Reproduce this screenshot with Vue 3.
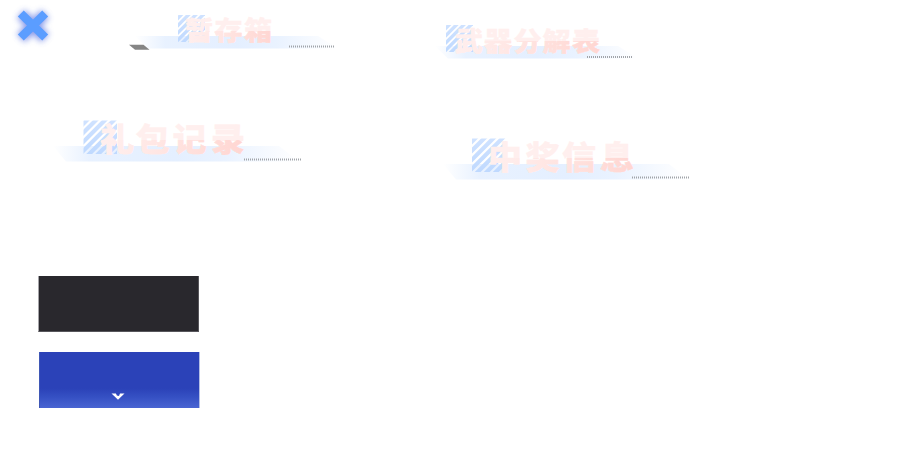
<script setup>
const titles = [
  { id: 'storage', text: '暂存箱', w: 220, h: 60, size: 28, xs: [65, 94.5, 124], base: 40.3, split: 31, sq: [58, 15, 27], bar: [15, 36, 203, 12.5], dots: [169, 46, 45], slab: true },
  { id: 'weapons', text: '武器分解表', w: 210, h: 60, size: 28, xs: [25, 54, 83.5, 112.5, 142], base: 50.8, split: 41, sq: [16, 25, 27], bar: [5, 46, 203, 12.5], dots: [157, 56.5, 45] },
  { id: 'gifts', text: '礼包记录', w: 260, h: 70, size: 34, xs: [50, 85.5, 122.5, 161], base: 51.2, split: 40, sq: [33.5, 20.5, 33.5], bar: [3, 46, 246, 15.5], dots: [194, 59, 58] },
  { id: 'winners', text: '中奖信息', w: 260, h: 70, size: 34, xs: [48, 85.5, 122, 160], base: 51.2, split: 40, sq: [32, 20.5, 33.5], bar: [3, 46, 246, 15.5], dots: [192, 59, 58] },
]
</script>

<template>
  <main class="sheet">
    <svg class="close" width="66" height="60" viewBox="0 0 66 60" aria-label="close">
      <path class="halo" d="M21 14 L45 38 M45 14 L21 38" />
      <path class="cross" d="M20.8 13.5 L45.2 37.5 M45.2 13.5 L20.8 37.5" />
    </svg>

    <svg v-for="t in titles" :key="t.id" class="title" :class="t.id" :width="t.w" :height="t.h" :viewBox="`0 0 ${t.w} ${t.h}`">
      <defs>
        <linearGradient :id="`bar-${t.id}`">
          <stop offset="0" stop-color="#e4efff" stop-opacity="0" />
          <stop offset=".15" stop-color="#e4efff" stop-opacity=".85" />
          <stop offset=".5" stop-color="#e4efff" />
          <stop offset=".7" stop-color="#e4efff" stop-opacity=".8" />
          <stop offset="1" stop-color="#e4efff" stop-opacity="0" />
        </linearGradient>
        <linearGradient :id="`low-${t.id}`" gradientUnits="userSpaceOnUse" :x1="t.xs[0]" y1="0" :x2="t.xs[t.xs.length - 1] + t.size" y2="0">
          <stop offset="0" stop-color="#ffefee" />
          <stop offset=".25" stop-color="#ffeae8" />
          <stop offset=".7" stop-color="#ffdeda" />
          <stop offset="1" stop-color="#ffd6d2" />
        </linearGradient>
        <linearGradient :id="`hatch-${t.id}`" gradientUnits="userSpaceOnUse" x1="0" :y1="t.sq[1]" x2="0" :y2="t.sq[1] + t.sq[2]">
          <stop offset="0" stop-color="#cfe2ff" />
          <stop offset="1" stop-color="#bfd9ff" />
        </linearGradient>
        <clipPath :id="`sq-${t.id}`">
          <rect :x="t.sq[0]" :y="t.sq[1]" :width="t.sq[2]" :height="t.sq[2]" />
        </clipPath>
        <clipPath :id="`clip-${t.id}`">
          <rect x="0" :y="t.split" :width="t.w" height="40" />
        </clipPath>
      </defs>
      <path
        :d="`M${t.bar[0]} ${t.bar[1]} H${t.bar[0] + t.bar[2] - 20} L${t.bar[0] + t.bar[2]} ${t.bar[1] + t.bar[3]} H${t.bar[0] + 13} Z`"
        :fill="`url(#bar-${t.id})`"
      />
      <g :clip-path="`url(#sq-${t.id})`">
        <path
          v-for="n in 8" :key="n"
          :d="`M${t.sq[0] - 4} ${t.sq[1] + (n - 1) * t.sq[2] * 0.27 + 7} l${t.sq[2] * 2} ${-t.sq[2] * 2}`"
          :stroke="`url(#hatch-${t.id})`" :stroke-width="t.sq[2] * 0.125"
        />
      </g>
      <path v-if="t.slab" d="M9 44.7 H23.5 L29.5 49.8 H15 Z" fill="#858585" />
      <g :transform="`translate(0 ${t.base}) scale(1 .95)`">
        <text class="label" :x="t.xs.join(' ')" y="0" :font-size="t.size" fill="#ffefee" stroke="#ffefee">{{ t.text }}</text>
      </g>
      <g :clip-path="`url(#clip-${t.id})`" aria-hidden="true">
        <g :transform="`translate(0 ${t.base}) scale(1 .95)`">
          <text class="label" :x="t.xs.join(' ')" y="0" :font-size="t.size" :fill="`url(#low-${t.id})`" :stroke="`url(#low-${t.id})`">{{ t.text }}</text>
        </g>
      </g>
      <path :d="`M${t.dots[0]} ${t.dots[1] + 0.5} h${t.dots[2]}`" class="dots" />
    </svg>

    <div class="panels">
      <div class="panel dark"></div>
      <div class="panel blue">
        <svg width="14" height="8" viewBox="0 0 14 8">
          <path d="M0.5 0.5 H5 L5.8 2.4 L8 3 L9 0.5 H13.5 L7 6.8 Z" fill="#fff" />
          <path d="M5 0 H8.4 L7 2.5 Z" fill="#2c46bd" />
        </svg>
      </div>
    </div>
  </main>
</template>

<style>
body { background: #fff; overflow: hidden; }
</style>
<style scoped>
.sheet {
  width: 899px;
  height: 462px;
  display: grid;
  grid-template-columns: 50px 70px 310px 469px;
  grid-template-rows: 100px 100px 262px;
}
.close { grid-area: 1 / 1; }
.halo { stroke: #7186e6; stroke-width: 11; filter: blur(3px); opacity: .85; }
.cross { stroke: #5b9dff; stroke-width: 8.5; }
.title { display: block; overflow: visible; }
.storage { grid-area: 1 / 3; }
.weapons { grid-area: 1 / 4; }
.gifts { grid-area: 2 / 1 / 3 / 4; margin-left: 50px; }
.winners { grid-area: 2 / 4; margin: 18px 0 0 10px; }
.label {
  font-family: "Noto Sans CJK SC", sans-serif;
  font-weight: 900;
  stroke-width: .3;
}
.dots { stroke: #a2a5aa; stroke-width: 2; stroke-dasharray: 1 1; fill: none; }
.panels {
  grid-area: 3 / 1 / 4 / 4;
  display: flex;
  flex-direction: column;
  gap: 20px;
  padding: 76px 0 0 38px;
}
.panel { box-sizing: border-box; width: 161px; height: 56px; }
.dark {
  background: #29282d;
  border: solid #57565b;
  border-width: 0 1px 1px;
  border-left-color: #a5a4a8;
}
.blue {
  display: flex;
  justify-content: center;
  align-items: flex-end;
  padding: 0 3px 7px 0;
  margin-left: 1px;
  background: linear-gradient(#2b42b8 0 65%, #3550c3 80%, #4964d2);
  border: solid #3f57b5;
  border-width: 0 1px;
  border-right-color: #b5bfe5;
}
</style>
